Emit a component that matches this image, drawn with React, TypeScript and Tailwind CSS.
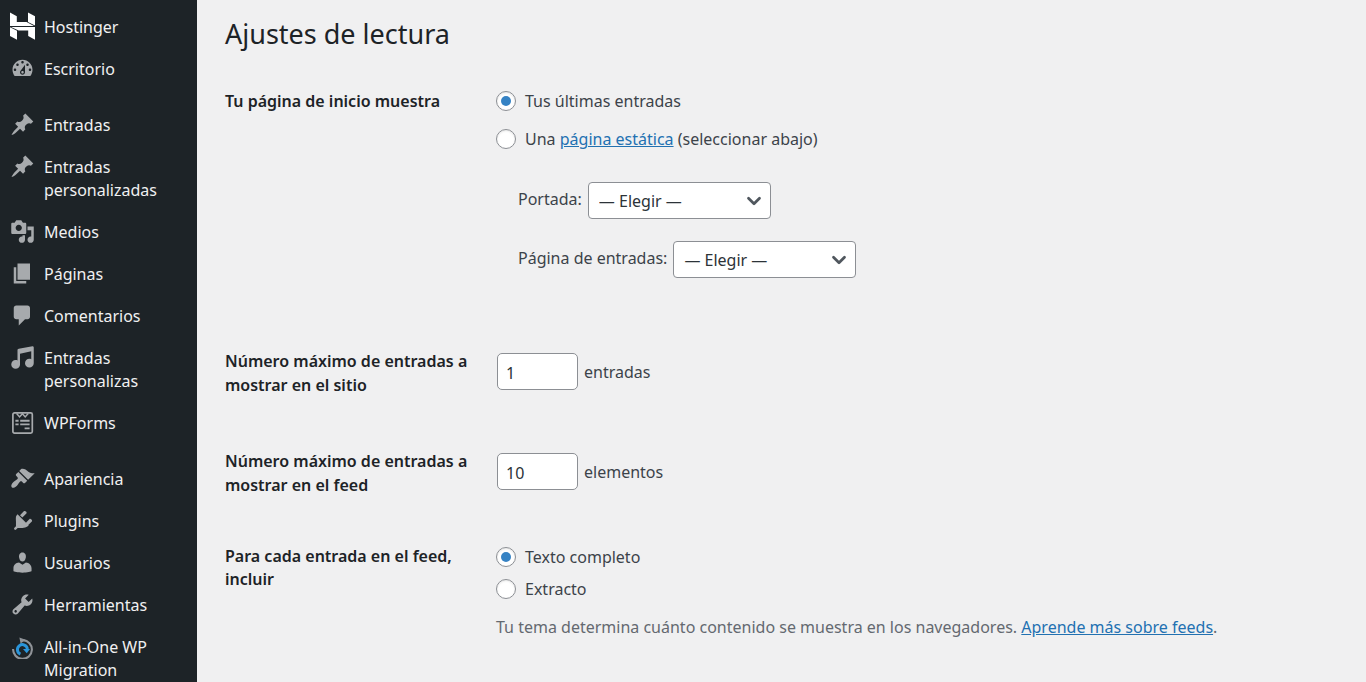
import React, { useState } from 'react';
import { ChevronDown } from 'lucide-react';
import clsx from 'clsx';

const ICONS = {
  dashboard:
    'M3.76 16h12.48c1.1-1.37 1.76-3.11 1.76-5 0-4.42-3.58-8-8-8s-8 3.58-8 8c0 1.89.66 3.63 1.76 5zM10 4c.55 0 1 .45 1 1s-.45 1-1 1-1-.45-1-1 .45-1 1-1zM6 6c.55 0 1 .45 1 1s-.45 1-1 1-1-.45-1-1 .45-1 1-1zm8 0c.55 0 1 .45 1 1s-.45 1-1 1-1-.45-1-1 .45-1 1-1zm-5.37 5.55L12 7v6c0 1.1-.9 2-2 2s-2-.9-2-2c0-.57.24-1.08.63-1.45zM4 10c.55 0 1 .45 1 1s-.45 1-1 1-1-.45-1-1 .45-1 1-1zm12 0c.55 0 1 .45 1 1s-.45 1-1 1-1-.45-1-1 .45-1 1-1zm-5 3c0-.55-.45-1-1-1s-1 .45-1 1 .45 1 1 1 1-.45 1-1z',
  post: 'M10.44 3.02l1.82-1.82 6.36 6.35-1.83 1.82c-1.05-.68-2.48-.57-3.41.36l-.75.75c-.92.93-1.04 2.35-.35 3.41l-1.83 1.82-2.41-2.41-2.8 2.79c-.42.42-3.38 2.71-3.8 2.29s1.86-3.39 2.28-3.81l2.79-2.79L4.1 9.36l1.83-1.82c1.05.69 2.48.57 3.4-.36l.75-.75c.93-.92 1.05-2.35.36-3.41z',
  media:
    'M13 11V4c0-.55-.45-1-1-1h-1.67L9 1H5L3.67 3H2c-.55 0-1 .45-1 1v7c0 .55.45 1 1 1h10c.55 0 1-.45 1-1zM7 4.5c1.38 0 2.5 1.12 2.5 2.5S8.38 9.5 7 9.5 4.5 8.38 4.5 7 5.62 4.5 7 4.5zM14 6h5v10.5c0 1.38-1.12 2.5-2.5 2.5S14 17.88 14 16.5s1.12-2.5 2.5-2.5c.17 0 .34.02.5.05V9h-3V6zm-4 8.05V13h2v3.5c0 1.38-1.12 2.5-2.5 2.5S7 17.88 7 16.5 8.12 14 9.5 14c.17 0 .34.02.5.05z',
  page: 'M6 15V2h10v13H6zm-1 1h8v2H3V5h2v11z',
  comments: 'M5 2h9c1.1 0 2 .9 2 2v7c0 1.1-.9 2-2 2h-2l-5 5v-5H5c-1.1 0-2-.9-2-2V4c0-1.1.9-2 2-2z',
  audio:
    'M6.99 3.08l11.02-2c.55-.08.99.45.99 1V14.5c0 1.94-1.57 3.5-3.5 3.5S12 16.44 12 14.5c0-1.93 1.57-3.5 3.5-3.5.54 0 1.04.14 1.5.35V5.08l-9 2V16c-.24 1.7-1.74 3-3.5 3C2.57 19 1 17.44 1 15.5 1 13.57 2.57 12 4.5 12c.54 0 1.04.14 1.5.35V4.08c0-.55.44-.91.99-1z',
  appearance:
    'M14.48 11.06L7.41 3.99l1.5-1.5c.5-.56 2.3-.47 3.51.32 1.21.8 1.43 1.28 2.91 2.1 1.18.64 2.45 1.26 4.45.85zm-.71.71L6.7 4.7 4.93 6.47c-.39.39-.39 1.02 0 1.41l1.06 1.06c.39.39.39 1.03 0 1.42-.6.6-1.43 1.11-2.21 1.69-.35.26-.7.53-1.01.84C1.43 14.23.4 16.08 1.4 17.07c.99 1 2.84-.03 4.18-1.36.31-.31.58-.66.85-1.02.57-.78 1.08-1.61 1.69-2.21.39-.39 1.02-.39 1.41 0l1.06 1.06c.39.39 1.02.39 1.41 0z',
  plugins:
    'M13.11 4.36L9.87 7.6 8 5.73l3.24-3.24c.35-.34 1.05-.2 1.56.32.52.51.66 1.21.31 1.55zm-8 1.77l.91-1.12 9.01 9.01-1.19.84c-.71.71-2.63 1.16-3.82 1.16H6.14L4.9 17.26c-.38.38-.98.38-1.37 0-.38-.38-.38-.99 0-1.37l1.24-1.24v-3.88c0-1.13-.37-3.93.34-4.64zm7.26 5.97l3.24-3.24c.34-.35 1.04-.21 1.55.31.52.51.66 1.21.31 1.55l-3.24 3.25z',
  users:
    'M10 9.25c-2.27 0-2.73-3.44-2.73-3.44C7 4.02 7.82 2 9.97 2c2.16 0 2.98 2.02 2.71 3.81 0 0-.41 3.44-2.68 3.44zm0 2.57L12.72 10c2.39 0 4.52 2.33 4.52 4.53v2.49s-3.65 1.13-7.24 1.13c-3.65 0-7.24-1.13-7.24-1.13v-2.49c0-2.25 1.94-4.48 4.47-4.48z',
  tools:
    'M16.68 9.77c-1.34 1.34-3.3 1.67-4.95.99l-5.41 6.52c-.99.99-2.59.99-3.58 0s-.99-2.59 0-3.57l6.52-5.42c-.68-1.65-.35-3.61.99-4.95 1.28-1.28 3.12-1.62 4.72-1.06l-2.89 2.89 2.82 2.82 2.86-2.87c.53 1.58.18 3.39-1.08 4.65zM3.81 16.21c.4.39 1.04.39 1.43 0 .4-.4.4-1.04 0-1.43-.39-.4-1.03-.4-1.43 0-.39.39-.39 1.03 0 1.43z',
};

type IconName = keyof typeof ICONS | 'hostinger' | 'wpforms' | 'migration';

interface MenuEntry {
  label: string;
  icon: IconName;
}

const MENU_GROUPS: MenuEntry[][] = [
  [
    { label: 'Hostinger', icon: 'hostinger' },
    { label: 'Escritorio', icon: 'dashboard' },
  ],
  [
    { label: 'Entradas', icon: 'post' },
    { label: 'Entradas personalizadas', icon: 'post' },
    { label: 'Medios', icon: 'media' },
    { label: 'Páginas', icon: 'page' },
    { label: 'Comentarios', icon: 'comments' },
    { label: 'Entradas personalizas', icon: 'audio' },
    { label: 'WPForms', icon: 'wpforms' },
  ],
  [
    { label: 'Apariencia', icon: 'appearance' },
    { label: 'Plugins', icon: 'plugins' },
    { label: 'Usuarios', icon: 'users' },
    { label: 'Herramientas', icon: 'tools' },
    { label: 'All-in-One WP Migration', icon: 'migration' },
  ],
];

function MenuIcon({ name }: { name: IconName }) {
  if (name === 'hostinger') {
    return (
      <svg viewBox="0 0 25 28" className="h-7 w-[25px] shrink-0 fill-white" aria-hidden="true">
        <path d="M0 .5l6.8 3.8v5.8h9.8l7.4 3.8H0z" />
        <path d="M18 .5l7 3.8v9.2l-7-3.6z" />
        <path d="M25 27.8l-6.8-3.7v-5.5H8.6L1 14.9h24z" />
        <path d="M0 15.2l7 3.5v9.1l-7-3.7z" />
      </svg>
    );
  }
  if (name === 'wpforms') {
    return (
      <svg viewBox="0 0 25 25" className="size-[25px] shrink-0 fill-none stroke-[#a7aaad]" aria-hidden="true">
        <rect x="2.9" y="2.9" width="19.4" height="20.2" rx="1.6" strokeWidth="1.7" />
        <path d="M6.6 3.5l3 3.4 2.8-3.2 2.8 3.2 3-3.4" strokeWidth="1.5" />
        <path d="M5.4 10.7h3.2M10.2 10.7h9.4M5.4 14.4h3.2M10.2 14.4h9.4M14.6 18.4h5" strokeWidth="1.9" />
      </svg>
    );
  }
  if (name === 'migration') {
    return (
      <svg viewBox="0 -3 25 25" className="size-[25px] shrink-0 fill-none" aria-hidden="true">
        <path d="M13 3.1a9.4 9.4 0 1 1-9.9 8.9" stroke="#8f9398" strokeWidth="2.1" />
        <path d="M9.4.6l6.2 2.2-5 3.6z" fill="#8f9398" />
        <path d="M10.4 17.2a5 5 0 1 1 7-5.2" stroke="#2a95da" strokeWidth="3" />
        <path d="M13 12h7l-3.3 4.2z" fill="#2a95da" />
      </svg>
    );
  }
  return (
    <svg viewBox="0 0 20 20" className="size-[25px] shrink-0 fill-[#a7aaad]" aria-hidden="true">
      <path d={ICONS[name]} />
    </svg>
  );
}

function Sidebar() {
  return (
    <nav className="w-[197px] shrink-0 bg-[#1d2327] pt-[7px]" aria-label="Menú principal">
      <div className="flex flex-col gap-[14px]">
        {MENU_GROUPS.map((group) => (
          <ul key={group[0].label}>
            {group.map((item) => (
              <li key={item.label}>
                <a href="#" className="flex items-start gap-[9px] pl-[10px] text-[16px] leading-[23px] text-[#f0f0f1]">
                  <span className={clsx('flex w-[25px] shrink-0 justify-center', item.icon === 'hostinger' ? 'pt-[5px]' : 'pt-[7px]')}>
                    <MenuIcon name={item.icon} />
                  </span>
                  <span className="w-[130px] pt-[9px] pb-[10px]">{item.label}</span>
                </a>
              </li>
            ))}
          </ul>
        ))}
      </div>
    </nav>
  );
}

interface RadioProps {
  name: string;
  checked: boolean;
  onSelect: () => void;
  children: React.ReactNode;
}

function Radio({ name, checked, onSelect, children }: RadioProps) {
  return (
    <label className="flex items-center gap-[9px]">
      <input
        type="radio"
        name={name}
        checked={checked}
        onChange={onSelect}
        className="grid size-5 shrink-0 appearance-none place-content-center rounded-full border border-[#8c8f94] bg-white shadow-[inset_0_1px_2px_rgba(0,0,0,0.1)] before:size-[10px] before:rounded-full checked:before:bg-[#3582c4]"
      />
      <span>{children}</span>
    </label>
  );
}

function PageSelect({ id, label }: { id: string; label: string }) {
  return (
    <div className="flex items-center gap-[6px]">
      <label htmlFor={id} className="pb-1">
        {label}
      </label>
      <div className="relative">
        <select
          id={id}
          className="h-[37px] w-[183px] appearance-none rounded border border-[#8c8f94] bg-white pl-[10px] text-[16px] text-[#2c3338]"
        >
          <option>— Elegir —</option>
        </select>
        <ChevronDown className="pointer-events-none absolute top-2 right-[6px] size-[22px] text-[#50575e]" strokeWidth={3} />
      </div>
    </div>
  );
}

function NumberField({ id, value, unit }: { id: string; value: number; unit: string }) {
  return (
    <div className="flex items-center gap-[6px]">
      <input
        id={id}
        type="number"
        defaultValue={value}
        className="h-[37px] w-[81px] rounded-[5px] border border-[#8c8f94] bg-white px-2 pt-[2px] text-[16px] text-[#2c3338] [appearance:textfield]"
      />
      <span>{unit}</span>
    </div>
  );
}

const ROW = 'grid grid-cols-[250px_1fr] gap-x-[22px]';
const HEADING = 'text-[16px] font-semibold text-[#1d2327]';
const LINK = 'text-[#2271b1] underline';

export default function App() {
  const [front, setFront] = useState('posts');
  const [feed, setFeed] = useState('full');

  return (
    <div className="flex h-screen overflow-hidden bg-[#f0f0f1] font-['Noto_Sans',sans-serif] text-[16px] leading-6 text-[#3c434a]">
      <Sidebar />
      <main className="min-w-0 flex-1 pt-4 pl-7">
        <h1 className="text-[27px] leading-9 text-[#1d2327]">Ajustes de lectura</h1>

        <form className="pt-[37px]">
          <div className={ROW} role="radiogroup" aria-labelledby="front-heading">
            <h2 id="front-heading" className={HEADING}>
              Tu página de inicio muestra
            </h2>
            <div className="-ml-px">
              <div className="flex flex-col gap-[14px]">
                <Radio name="front" checked={front === 'posts'} onSelect={() => setFront('posts')}>
                  Tus últimas entradas
                </Radio>
                <Radio name="front" checked={front === 'page'} onSelect={() => setFront('page')}>
                  Una{' '}
                  <a href="#" className={LINK}>
                    página estática
                  </a>{' '}
                  (seleccionar abajo)
                </Radio>
              </div>
              <div className="flex flex-col gap-[22px] pt-[31px] pl-[22px]">
                <PageSelect id="page-on-front" label="Portada:" />
                <PageSelect id="page-for-posts" label="Página de entradas:" />
              </div>
            </div>
          </div>

          <div className={clsx(ROW, 'pt-[71px]')}>
            <label htmlFor="posts-per-page" className={HEADING}>
              Número máximo de entradas a mostrar en el sitio
            </label>
            <div className="pt-1">
              <NumberField id="posts-per-page" value={1} unit="entradas" />
            </div>
          </div>

          <div className={clsx(ROW, 'pt-[52px]')}>
            <label htmlFor="posts-per-rss" className={HEADING}>
              Número máximo de entradas a mostrar en el feed
            </label>
            <div className="pt-1">
              <NumberField id="posts-per-rss" value={10} unit="elementos" />
            </div>
          </div>

          <div className={clsx(ROW, 'pt-12')} role="radiogroup" aria-labelledby="feed-heading">
            <h2 id="feed-heading" className={clsx(HEADING, 'leading-[23px]')}>
              Para cada entrada en el feed, incluir
            </h2>
            <div className="-ml-px">
              <div className="flex flex-col gap-2">
                <Radio name="feed" checked={feed === 'full'} onSelect={() => setFeed('full')}>
                  Texto completo
                </Radio>
                <Radio name="feed" checked={feed === 'excerpt'} onSelect={() => setFeed('excerpt')}>
                  Extracto
                </Radio>
              </div>
              <p className="pt-[14px] text-[#646970]">
                Tu tema determina cuánto contenido se muestra en los navegadores.{' '}
                <a href="#" className={LINK}>
                  Aprende más sobre feeds
                </a>
                .
              </p>
            </div>
          </div>
        </form>
      </main>
    </div>
  );
}
